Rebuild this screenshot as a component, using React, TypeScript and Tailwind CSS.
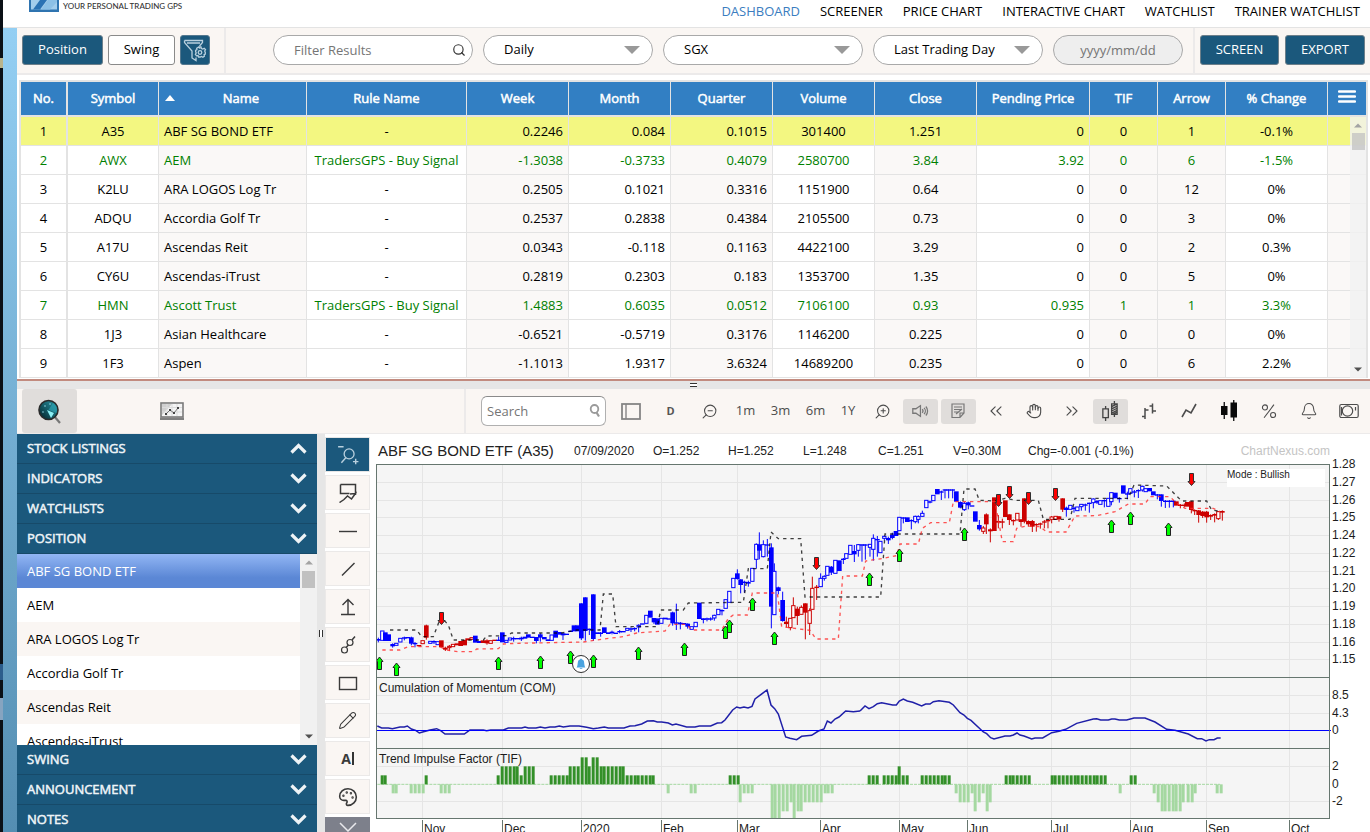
import React from "react";
import {
  Bell,
  ChevronsLeft,
  ChevronsRight,
  Hand,
  Palette,
  Pencil,
  Search,
  ZoomIn,
  ZoomOut,
} from "lucide-react";

/* ------------------------------------------------------------------ data */

const NAV = [
  "DASHBOARD",
  "SCREENER",
  "PRICE CHART",
  "INTERACTIVE CHART",
  "WATCHLIST",
  "TRAINER WATCHLIST",
];

type Column = { label: string; col: string; cell: string };

const COLUMNS: Column[] = [
  { label: "No.", col: "w-[47px]", cell: "text-center border-r-2" },
  { label: "Symbol", col: "w-[91px]", cell: "text-center border-r" },
  { label: "Name", col: "w-[148px]", cell: "text-left pl-[5px] border-r bg-[#faf8f7]" },
  { label: "Rule Name", col: "w-[160px]", cell: "text-center border-r" },
  { label: "Week", col: "w-[102px]", cell: "text-right pr-[5px] border-r bg-[#faf8f7]" },
  { label: "Month", col: "w-[102px]", cell: "text-right pr-[5px] border-r" },
  { label: "Quarter", col: "w-[102px]", cell: "text-right pr-[5px] border-r bg-[#faf8f7]" },
  { label: "Volume", col: "w-[102px]", cell: "text-center border-r" },
  { label: "Close", col: "w-[102px]", cell: "text-center border-r bg-[#faf8f7]" },
  { label: "Pending Price", col: "w-[113px]", cell: "text-right pr-[5px] border-r" },
  { label: "TIF", col: "w-[68px]", cell: "text-center border-r bg-[#faf8f7]" },
  { label: "Arrow", col: "w-[68px]", cell: "text-center border-r bg-[#faf8f7]" },
  { label: "% Change", col: "w-[102px]", cell: "text-center border-r" },
];

const ROWS: string[][] = [
  ["1", "A35", "ABF SG BOND ETF", "-", "0.2246", "0.084", "0.1015", "301400", "1.251", "0", "0", "1", "-0.1%"],
  ["2", "AWX", "AEM", "TradersGPS - Buy Signal", "-1.3038", "-0.3733", "0.4079", "2580700", "3.84", "3.92", "0", "6", "-1.5%"],
  ["3", "K2LU", "ARA LOGOS Log Tr", "-", "0.2505", "0.1021", "0.3316", "1151900", "0.64", "0", "0", "12", "0%"],
  ["4", "ADQU", "Accordia Golf Tr", "-", "0.2537", "0.2838", "0.4384", "2105500", "0.73", "0", "0", "3", "0%"],
  ["5", "A17U", "Ascendas Reit", "-", "0.0343", "-0.118", "0.1163", "4422100", "3.29", "0", "0", "2", "0.3%"],
  ["6", "CY6U", "Ascendas-iTrust", "-", "0.2819", "0.2303", "0.183", "1353700", "1.35", "0", "0", "5", "0%"],
  ["7", "HMN", "Ascott Trust", "TradersGPS - Buy Signal", "1.4883", "0.6035", "0.0512", "7106100", "0.93", "0.935", "1", "1", "3.3%"],
  ["8", "1J3", "Asian Healthcare", "-", "-0.6521", "-0.5719", "0.3176", "1146200", "0.225", "0", "0", "0", "0%"],
  ["9", "1F3", "Aspen", "-", "-1.1013", "1.9317", "3.6324", "14689200", "0.235", "0", "0", "6", "2.2%"],
];

const POSITIONS = [
  "ABF SG BOND ETF",
  "AEM",
  "ARA LOGOS Log Tr",
  "Accordia Golf Tr",
  "Ascendas Reit",
  "Ascendas-iTrust",
];

/* Candles: x, body top, body bottom, kind, [high, low]; in thirds of a pixel.
   b/r filled blue/red, B/R hollow blue/red. */
const CANDLES_A = `25 537 542 b 533 547;37 513 541 B;46 517 543 b;56 523 543 b;68 552 559 b 550 563;79 550 556 B;91 535 546 B;103 532 535 b 530 541;113 531 534 b;124 532 551 b 530 556;135 549 553 b 546 562;147 555 559 r;158 542 551 R;169 496 533 r 494 539;181 544 550 B;192 543 547 b 541 552;203 545 554 B;214 541 562 r;226 563 569 r 560 573;238 559 563 R 555 573;249 553 560 R;261 550 556 r;272 543 558 r;284 540 556 r;293 535 541 r;305 533 538 R;316 527 548 b;328 543 549 b;339 541 549 r;351 541 550 r 538 554;362 542 550 R;374 539 543 r;386 539 543 b 530 543;397 517 547 b;409 541 547 B;420 534 540 B;431 534 538 b 530 545;443 534 538 b;454 533 538 b 530 543;465 530 536 b;475 523 533 b;487 530 534 b;499 531 543 b 531 550;511 523 533 b 520 545;523 531 538 b;534 538 543 b;545 525 541 B;557 512 533 b;568 516 524 b;579 520 526 b 518 540;590 521 524 b;602 512 515 b;612 496 514 b;623 496 514 b;634 430 535 b 430 540;646 412 513 b 412 542;658 506 510 b 506 525;670 403 537 b 403 543;682 517 522 b;692 518 521 b 516 530;703 502 519 b;715 517 522 b;726 515 519 b 512 523;737 518 521 b;749 513 516 b 510 520;760 513 517 b;772 505 511 B;783 505 509 b 502 516;794 504 508 b 502 514;806 496 501 B 493 517;817 490 494 b;829 466 490 B;841 452 473 b;852 474 487 b 474 492;862 475 494 b;874 475 490 B;886 473 478 b;897 475 478 b;908 457 490 b 455 497;919 487 490 b 431 510;931 488 493 b 486 508;942 489 493 b;953 491 500 b 490 506;965 500 508 B;977 487 500 B;988 428 477 b`;

const CANDLES_B = `40 475 480 b 475 490;51 475 479 b 473 484;62 475 478 b 472 482;73 466 474 B 464 482;85 448 464 B;96 450 453 b 448 466;107 419 445 B;118 394 427 B;130 355 383 B;142 340 357 b 328 359;152 358 375 b 358 400;163 365 368 b 362 398;175 366 371 b 362 380;187 325 364 B;199 253 298 B 250 326;208 253 272 b 217 298;220 254 290 B 241 292;232 253 257 b 237 290;244 262 440 b 250 505;253 334 464 B 310 464;265 382 393 b 380 403;278 420 483 b 395 485;289 485 492 r 470 503;301 475 503 R 475 511;310 437 473 R 412 473;322 446 468 r 440 495;334 442 463 R 436 463;346 430 458 r 430 538;359 452 490 R 445 525;367 385 448 R 350 448;380 380 384 r 375 420;392 355 380 B 340 380;403 349 355 B 346 362;412 319 346 B;424 320 338 b 318 345;436 301 340 B;448 301 333 b;460 296 299 b 294 312;469 281 295 B;481 256 283 B;493 273 283 b 255 306;505 254 271 B 252 290;516 253 256 b 253 305;526 253 256 b 253 299;540 253 262 B 253 290;550 235 268 B 223 302;562 237 240 b 228 290;571 244 278 B;583 229 235 B 227 242;595 234 241 b 230 252;607 224 234 b 218 238;618 213 228 b;628 172 212 B;640 172 176 b 172 190;652 172 186 b;664 180 184 b 178 208;676 169 185 B 167 190;685 170 178 B 166 190;697 160 169 B 152 170;709 121 143 B;720 124 127 b 122 130;730 106 122 B;742 87 103 b;754 94 98 b 92 120;765 88 92 b 88 115;776 88 92 b 88 115;788 88 92 b 88 115;799 94 125 b;811 126 143 b 124 145;823 130 149 B 126 153;835 127 136 b 125 148;846 136 140 b;856 154 185 b;868 195 208 b 180 212;880 204 214 R 198 222;889 163 193 r 160 222;901 208 214 r 205 247;913 112 213 r;925 183 188 r 165 205;937 184 188 r 176 205;946 121 171 r;958 163 180 r 163 195;970 180 184 r 178 196;982 160 180 R`;

const CANDLES_C = `33 178 186 r 178 200;43 115 185 r 115 190;55 183 193 r 181 200;67 183 200 r 180 216;79 192 196 r 190 215;91 190 194 r 188 206;103 184 188 r 180 205;114 180 184 r 178 205;125 171 178 R 168 190;137 169 178 R;147 169 178 r 168 185;158 115 149 r 115 156;169 143 150 b 140 170;181 136 148 B;192 143 147 b 140 158;202 141 152 B;214 133 140 B 133 152;226 133 136 b 131 152;238 128 132 b 128 158;250 117 128 B 115 145;261 123 128 b 120 132;271 122 133 B;283 120 124 b 118 142;295 115 139 B;304 98 125 B 98 136;316 98 115 b;328 114 118 b 112 128;340 76 101 b;352 100 104 b 95 118;361 86 100 B;373 94 98 b 90 112;385 90 94 b 88 114;397 79 90 B 77 95;407 86 95 B;419 84 94 b;430 94 106 b;442 103 107 b 102 118;454 103 123 b 103 140;466 122 125 b 120 144;478 122 125 b 120 143;490 122 126 b 120 142;499 124 137 r;511 134 138 r 132 145;523 134 138 r 130 142;532 126 140 r;544 124 150 r 124 160;554 150 154 r 148 165;566 151 165 r 150 188;578 155 168 r 153 174;590 155 172 r 153 188;602 165 170 r 163 180;614 162 167 r 160 187;625 155 176 R 153 180;637 153 158 r 151 182`;

const UPPER =
  "60,510 140,510 155,530 190,530 213,470 235,495 250,540 340,540 350,528 410,527 425,519 575,519 620,510 690,510 700,402 728,402 738,500 862,500 872,450 940,450 955,429 1120,427 1135,326 1192,326 1203,216 1225,236 1292,236 1305,411 1532,411 1545,222 1770,222 1782,87 1815,87 1828,121 1875,123 1905,115 1940,121 2005,121 2020,178 2100,178 2115,115 2275,115 2292,75 2390,78 2435,123 2510,123 2525,150 2555,155";
const LOWER =
  "37,570 90,570 115,560 210,560 230,570 265,575 310,575 320,567 385,566 400,552 440,550 640,546 700,537 760,530 800,519 885,513 900,493 950,493 965,510 1055,510 1075,475 1090,465 1132,465 1147,399 1222,399 1235,500 1320,511 1338,537 1405,537 1418,348 1477,348 1487,303 1540,295 1580,287 1590,252 1645,252 1657,205 1682,188 1738,188 1750,125 1875,125 1897,245 1930,245 1940,205 1970,198 2010,200 2030,216 2088,216 2115,168 2180,167 2235,155 2275,132 2325,132 2340,110 2400,110 2420,130 2445,145 2530,145 2550,155";

const COM_LEFT =
  "22,150 35,156 55,156 67,158 90,153 103,153 112,150 124,159 137,163 148,171 158,168 180,162 200,158 212,164 225,174 283,174 300,162 340,162 350,164 362,162 400,162 415,156 455,156 465,153 475,156 498,156 511,153 525,156 540,153 555,153 568,150 580,153 600,150 627,150 650,154 670,158 685,156 703,153 715,156 762,156 780,150 795,149 815,144 832,135 850,134 862,138 875,138 895,141 907,147 918,144 950,153 975,153 988,150 1022,150 1042,141 1055,140 1065,132 1088,102 1100,93 1110,96 1122,93 1134,96 1146,91 1155,69 1191,42 1203,87 1214,98 1225,114 1247,183 1260,187 1280,191 1295,181 1325,178 1345,165 1362,159 1372,135 1383,141 1395,129 1407,123 1427,105 1450,107 1470,105";
const COM_RIGHT =
  "0,105 15,90 27,98 40,92 52,83 65,80 98,87 109,87 118,75 130,69 142,75 158,79 185,90 197,84 210,84 220,77 237,74 268,79 280,87 300,110 312,117 322,127 333,133 370,168 380,173 392,185 402,189 435,180 450,180 460,177 471,171 480,177 492,180 515,189 525,186 548,186 575,170 597,166 617,160 650,142 700,129 710,128 722,132 745,132 755,129 765,129 778,132 800,132 822,126 855,126 885,138 920,160 945,163 985,174 1012,188 1025,188 1038,195 1048,191 1062,191 1072,186 1082,186";

/* Runs of impulse bars: first x, last x, level. */
const TIF_LEFT = [
  [35, 44, 1], [68, 79, -1], [124, 158, -1], [169, 169, 1], [214, 238, -1], [385, 385, 1], [397, 442, 2],
  [454, 454, 1], [465, 488, 2], [544, 590, 1], [601, 624, 2], [635, 647, 3], [658, 658, 2], [669, 681, 3],
  [692, 760, 2], [772, 850, 1], [895, 895, -1], [964, 976, -1], [1079, 1103, 1], [1111, 1111, -2],
  [1123, 1147, -1], [1205, 1226, -4], [1238, 1250, -3], [1262, 1262, -2], [1271, 1271, -4],
  [1283, 1294, -3], [1306, 1352, -2], [1364, 1385, -1],
];
const TIF_RIGHT = [
  [28, 52, 1], [73, 108, 1], [118, 118, 2], [130, 142, 1], [187, 268, 1], [289, 289, -1], [301, 323, -2],
  [335, 335, -1], [346, 346, -3], [358, 358, -2], [370, 370, -1], [380, 380, -3], [391, 391, -2],
  [437, 506, 1], [575, 735, 1], [779, 779, -1], [812, 824, 1], [881, 881, -1], [893, 893, -2],
  [905, 960, -3], [970, 995, -2], [1006, 1006, -1], [1072, 1084, -1],
];

const UP_ARROWS = [
  [379, 657], [396, 663], [498, 657], [540, 656], [570, 651], [593, 655], [638, 647], [684, 643],
  [725, 626], [729, 620], [752, 598], [774, 632], [869, 573], [899, 549], [964, 528],
  [1111, 520], [1130, 512], [1168, 523],
];
const DOWN_ARROWS = [[441, 612], [816, 557], [998, 494], [1009, 486], [1028, 492], [1055, 488], [1191, 473]];

const MONTHS: [number, string][] = [
  [422, "Nov"], [502, "Dec"], [581, "2020"], [661, "Feb"], [737, "Mar"], [820, "Apr"],
  [899, "May"], [967, "Jun"], [1051, "Jul"], [1130, "Aug"], [1206, "Sep"], [1289, "Oct"],
];
const PRICES: [number, string][] = [
  [464, "1.28"], [482, "1.27"], [500, "1.26"], [517, "1.25"], [535, "1.24"], [553, "1.22"],
  [571, "1.21"], [588, "1.20"], [606, "1.19"], [624, "1.18"], [642, "1.16"], [659, "1.15"],
  [695, "8.5"], [713, "4.3"], [730, "0"], [766, "2"], [784, "0"], [801, "-2"],
];

/* ----------------------------------------------------------------- chart */

const BLUE = "#0000ff";
const RED = "#cc0000";

function Candles({ data }: { data: string }) {
  return (
    <>
      {data.split(";").map((line) => {
        const [x, top, bottom, kind, high, low] = line.trim().split(" ");
        const cx = Number(x);
        const color = kind.toLowerCase() === "b" ? BLUE : RED;
        const hollow = kind === "B" || kind === "R";
        const h = Number(bottom) - Number(top);
        return (
          <g key={x}>
            {high && (
              <line x1={cx} x2={cx} y1={Number(high)} y2={Number(low)} stroke={color} strokeWidth={3} />
            )}
            {hollow ? (
              <rect x={cx - 5} y={Number(top)} width={10} height={Math.max(h, 4)} fill="#ffffff" stroke={color} strokeWidth={3} />
            ) : (
              <rect x={cx - 7} y={Number(top)} width={14} height={Math.max(h, 4)} fill={color} />
            )}
          </g>
        );
      })}
    </>
  );
}

function ImpulseBars({ runs }: { runs: number[][] }) {
  const bars: React.ReactNode[] = [];
  runs.forEach(([from, to, level]) => {
    const n = Math.round((to - from) / 11.45);
    for (let i = 0; i <= n; i++) {
      const x = n === 0 ? from : from + ((to - from) * i) / n;
      const h = Math.min(Math.abs(level) * 27, 102);
      bars.push(
        <rect
          key={`${from}-${i}`}
          x={Math.round(x / 3) * 3 - 4}
          y={level > 0 ? 325 - h : 325}
          width={9}
          height={h}
          fill={level > 0 ? "#339029" : "#a5d8a1"}
        />,
      );
    }
  });
  return <>{bars}</>;
}

function Chart() {
  return (
    <svg
      viewBox="371 462 999 370"
      className="block w-full overflow-visible"
      fontFamily="'Liberation Sans', Arial, sans-serif"
      fontSize="12"
      role="img"
      aria-label="Daily price chart"
    >
      <rect x="376" y="464" width="954" height="354" fill="#f5f5f5" />
      <g stroke="#e5e5e5" shapeRendering="crispEdges">
        {MONTHS.map(([x]) => (
          <line key={x} x1={x + 0.5} x2={x + 0.5} y1="464" y2="818" />
        ))}
        {PRICES.filter(([, l]) => l !== "0").map(([y]) => (
          <line key={y} x1="377" x2="1329" y1={y + 0.5} y2={y + 0.5} />
        ))}
      </g>

      <defs>
        <clipPath id="plot">
          <rect x="377" y="465" width="952" height="353" />
        </clipPath>
      </defs>
      <g clipPath="url(#plot)">
        <g transform="translate(370 460) scale(0.333333)">
          <Candles data={CANDLES_A} />
        </g>
        <g transform="translate(690 460) scale(0.333333)">
          <Candles data={CANDLES_B} />
        </g>
        <g transform="translate(1010 460) scale(0.333333)">
          <Candles data={CANDLES_C} />
        </g>
        <g transform="translate(370 460) scale(0.333333)" fill="none" strokeWidth="4" strokeDasharray="10 12">
          <polyline points={UPPER} stroke="#000000" strokeOpacity="0.75" />
          <polyline points={LOWER} stroke="#ff2a2a" strokeOpacity="0.8" />
        </g>
        <g fill="#00ff00" stroke="#202020">
          {UP_ARROWS.map(([x, y]) => (
            <path key={`${x}u`} d={`M${x + 0.5} ${y}l3.5 4.5h-1.500v8h-4v-8h-1.500z`} />
          ))}
        </g>
        <g fill="#ff0000" stroke="#303030">
          {DOWN_ARROWS.map(([x, y]) => (
            <path key={`${x}d`} d={`M${x - 1.5} ${y + 0.5}h4v8h1.500l-3.500 4l-3.500 -4h1.500z`} />
          ))}
        </g>
        <circle cx="581" cy="664" r="8.5" fill="#ffffff" stroke="#303030" />
        <path d="M576.5 667.5c1.5-1.5 1-5.5 1.8-6.8c.6-1 1.7-1.2 1.9-1.4c0-1.2 1.6-1.2 1.6 0c.2.2 1.3.4 1.9 1.4c.8 1.3.3 5.300 1.8 6.800z M579.800 668.300h2.500v.8h-2.500z" fill="#4aa3df" />
      </g>

      <g transform="translate(370 676) scale(0.333333)">
        <polyline points={COM_LEFT} fill="none" stroke="#1f1fa8" strokeWidth="4.5" />
        <line x1="22" x2="1500" y1="325" y2="325" stroke="#a5d8a1" strokeWidth="3" strokeDasharray="9 3" />
        <ImpulseBars runs={TIF_LEFT} />
      </g>
      <g transform="translate(860 676) scale(0.333333)">
        <polyline points={COM_RIGHT} fill="none" stroke="#1f1fa8" strokeWidth="4.5" />
        <line x1="30" x2="1080" y1="325" y2="325" stroke="#a5d8a1" strokeWidth="3" strokeDasharray="9 3" />
        <ImpulseBars runs={TIF_RIGHT} />
      </g>
      <line x1="377" x2="1331" y1="730.5" y2="730.5" stroke="#0000ff" shapeRendering="crispEdges" />

      <g stroke="#66766f" fill="none" shapeRendering="crispEdges">
        <rect x="376.500" y="464.500" width="953" height="354" />
        <line x1="376" x2="1330" y1="677.500" y2="677.500" />
        <line x1="376" x2="1330" y1="748.500" y2="748.500" />
        {MONTHS.map(([x]) => (
          <line key={x} x1={x + 0.5} x2={x + 0.5} y1="820" y2="832" />
        ))}
      </g>

      <rect x="1227" y="469" width="98" height="18" fill="#ffffff" />
      <g fill="#1c1c1c">
        <text x="1227" y="478" fontSize="10">Mode : Bullish</text>
        <text x="379" y="692">Cumulation of Momentum (COM)</text>
        <text x="379" y="763">Trend Impulse Factor (TIF)</text>
        {PRICES.map(([y, label]) => (
          <text key={y} x="1332" y={y + 4}>{label}</text>
        ))}
        {MONTHS.map(([x, label]) => (
          <text key={x} x={x + 2} y="833">{label}</text>
        ))}
      </g>
    </svg>
  );
}

/* ----------------------------------------------------------------- icons */

function Svg({ size = 20, children }: { size?: number; children: React.ReactNode }) {
  return (
    <svg width={size} height={size} viewBox="0 0 20 20" fill="none" stroke="currentColor" strokeWidth="1.2" aria-hidden="true">
      {children}
    </svg>
  );
}

const FilterGearIcon = () => (
  <svg width="24" height="24" viewBox="0 0 24 24" fill="none" stroke="#b9d0de" strokeWidth="1.3" aria-hidden="true">
    <path d="M1.500 2.500h18v2l-3 3.500M1.500 2.500v2l7.500 8.500v7l4 2.500v-3M4 5h13" />
    <circle cx="17" cy="14.500" r="1.800" />
    <path d="M16 9h2l.4 1.500l1.400.6l1.400-.8l1.300 1.300l-.8 1.400l.6 1.400v1.600l-1.200.6l.3 1.500l-1.500 1.100l-1.400-.8l-1.300.6h-1.600l-.6-1.500l-1.400.3l-1.200-1.400l.8-1.500l-.6-1.400v-1.200l1.300-.6l-.2-1.500l1.500-1l1.100.6z" />
  </svg>
);

const PanelIcon = () => (
  <svg width="20" height="17" viewBox="0 0 20 17" fill="none" stroke="#858585" strokeWidth="1.800" aria-hidden="true">
    <rect x="1" y="1" width="18" height="15" />
    <path d="M5 1v15" strokeWidth="1.400" />
  </svg>
);

const SpeakerIcon = () => (
  <Svg size={18}>
    <path d="M2 7.500h3.500l5-3.500v12l-5-3.500H2zM12.500 8a3 3 0 0 1 0 4M14.500 6.500a5 5 0 0 1 0 7M16.500 5a7.500 7.500 0 0 1 0 10" strokeWidth="1.400" />
  </Svg>
);
const NoteIcon = () => (
  <Svg>
    <path d="M4 3h12v9l-4 4.500H4zM16 12h-4v4.500M6 6h8M6 8.500h8M6 11h4M8 13l6-5" />
  </Svg>
);
const CandleIcon = () => (
  <Svg size={22}>
    <path d="M3.500 8h5v8h-5zM6 5.500v2.500M6 16v3M14 1v2.500M14 13v2.500" />
    <path d="M11.500 3.500h5v9.500h-5zM11.500 6l5-2.500M11.500 8l5-2.500M11.500 10l5-2.500M11.500 12l5-2.500M12.500 13l4-2" />
  </Svg>
);
const OhlcIcon = () => (
  <Svg>
    <path d="M6 7v11M3 15.500h3M6 9h3.500M13.500 2.500v10M10.500 5h3M13.500 10h3.500" strokeWidth="1.500" />
  </Svg>
);
const LineIcon = () => (
  <Svg>
    <path d="M3 16l4-7l5 3l5-9" strokeWidth="1.600" />
  </Svg>
);
const SolidCandleIcon = () => (
  <svg width="20" height="22" viewBox="0 0 20 22" aria-hidden="true">
    <path d="M2 6h6.500v9H2zM4.600 2h1.300v17H4.600zM11.500 2.500H18v15h-6.500zM14.100 0h1.300v21h-1.300z" fill="#0a0a0a" />
  </svg>
);
const PercentIcon = () => (
  <Svg size={18}>
    <circle cx="5.500" cy="6" r="2.800" />
    <circle cx="14.500" cy="14.500" r="2.800" />
    <path d="M15.500 3L4.500 17.500" />
  </Svg>
);
const BellIcon = () => <Bell size={18} strokeWidth={1.400} />;
const CameraIcon = () => (
  <Svg>
    <rect x="0.800" y="3.500" width="18.400" height="13" rx="1.500" />
    <circle cx="8.500" cy="10" r="5.200" />
    <path d="M16.500 6v3.500M2.500 6v8.500" />
  </Svg>
);

const ScanIcon = () => (
  <svg width="26" height="26" viewBox="0 0 26 26" aria-hidden="true">
    <defs>
      <linearGradient id="lens" x1="1" y1="0" x2="0" y2="1">
        <stop offset="0" stopColor="#2b99a8" />
        <stop offset="0.550" stopColor="#135863" />
        <stop offset="1" stopColor="#041a20" />
      </linearGradient>
    </defs>
    <path d="M17 18l6 7" stroke="#777" strokeWidth="2.200" />
    <circle cx="11.500" cy="12" r="9.500" fill="url(#lens)" stroke="#2a2a2a" strokeWidth="1.600" />
    <path d="M11.500 12l4.500-7a9 9 0 0 1 3.500 10z" fill="#2ea9b9" opacity="0.600" />
    <path d="M10 12l4 8l3-5z" fill="#8df0f5" />
    <circle cx="8" cy="8" r="0.700" fill="#aef" />
    <circle cx="6" cy="14" r="0.700" fill="#aef" />
    <circle cx="13" cy="6" r="0.700" fill="#aef" />
  </svg>
);

const LaptopIcon = () => (
  <svg width="24" height="18" viewBox="0 0 24 18" fill="none" aria-hidden="true">
    <rect x="1" y="1" width="22" height="14" fill="#f4f4f4" stroke="#7a7a7a" strokeWidth="1.600" />
    <path d="M2 2h10L2 13z" fill="#cfcfcf" />
    <path d="M7 2v12M12 2v12M17 2v12M2 5.500h20M2 10h20" stroke="#dcdcdc" />
    <path d="M6 12l4-4l4 3l4-5" stroke="#777" />
    <path d="M5 11h2v2H5zM9 7h2v2H9zM13 10h2v2h-2zM17 5h2v2h-2z" fill="#444" />
    <path d="M0 15.500h24V18H0z" fill="#808080" />
  </svg>
);

const DRAW_TOOLS: { label: string; icon: React.ReactNode }[] = [
  {
    label: "Callout",
    icon: (
      <Svg>
        <path d="M2.500 1.500h15v9M2.500 1.500v9h9M17.500 9h1M18.500 9l-5 7l-4-3l-3.500 3.500l-4.500 3M12 11l5.500-.5M17.500 7v5" strokeWidth="1.500" />
      </Svg>
    ),
  },
  { label: "Horizontal line", icon: <Svg><path d="M1 10.500h18" strokeWidth="1.400" /></Svg> },
  { label: "Trend line", icon: <Svg><path d="M4 16.500L16.500 4" strokeWidth="1.500" /></Svg> },
  { label: "Extension", icon: <Svg><path d="M10 17V3M4.500 8L10 2.500L15.500 8M3 17.500h14" strokeWidth="1.400" /></Svg> },
  {
    label: "Link points",
    icon: (
      <Svg>
        <circle cx="6.500" cy="15" r="3" />
        <circle cx="12" cy="7.500" r="3" />
        <path d="M8 12.500l2.500-2.500M14 5l3-3.500" strokeWidth="1.500" />
      </Svg>
    ),
  },
  { label: "Rectangle", icon: <Svg><rect x="1.500" y="4.500" width="17" height="12" strokeWidth="1.400" /></Svg> },
  { label: "Pencil", icon: <Pencil size={19} strokeWidth={1.300} /> },
  { label: "Text", icon: <span className="border-r-2 border-[#333] pr-px text-[14px] leading-[13px] font-bold">A</span> },
  { label: "Palette", icon: <Palette size={20} strokeWidth={1.900} className="-scale-x-100" /> },
];

/* --------------------------------------------------------------- pieces */

function Pill({ label, value, width }: { label: string; value: string; width: string }) {
  return (
    <div className={`relative ${width}`}>
      <select
        aria-label={label}
        className="block h-[30px] w-full appearance-none rounded-full border border-[#a9a9a9] bg-white pl-[20px] text-[13px] text-black"
      >
        <option>{value}</option>
      </select>
      <svg width="16" height="8" viewBox="0 0 16 8" className="pointer-events-none absolute top-[11px] right-[13px]" aria-hidden="true">
        <path d="M0 0h16l-8 8z" fill="#999" />
      </svg>
    </div>
  );
}

function ScrollArrow({ up, dim }: { up?: boolean; dim?: boolean }) {
  return (
    <svg width="8" height="5" viewBox="0 0 8 5" aria-hidden="true">
      <path d={up ? "M0 4.500L4 0.500L8 4.500z" : "M0 0.500L4 4.500L8 0.500z"} fill={dim ? "#a3a3a3" : "#505050"} />
    </svg>
  );
}

function PanelHeading({ title, open }: { title: string; open?: boolean }) {
  return (
    <button
      type="button"
      className="flex h-[30px] w-full shrink-0 items-center justify-between border-b border-[#174a69] bg-[#1b587c] px-[10px] text-[13px] font-medium text-[#eef4f8] [-webkit-text-stroke:0.5px]"
    >
      {title}
      <svg width="17" height="11" viewBox="0 0 17 11" fill="none" stroke="#eef3f6" strokeWidth="3.200" aria-hidden="true">
        <path d={open ? "M1.500 9.500l7-7l7 7" : "M1.500 1.500l7 7l7-7"} />
      </svg>
    </button>
  );
}

function ToolButton({ label, width, active, children }: { label: string; width: string; active?: boolean; children: React.ReactNode }) {
  return (
    <button type="button" aria-label={label} className={`flex h-full shrink-0 items-center justify-center text-[13px] text-[#4c4c4c] ${width}`}>
      {active ? (
        <span className="flex h-[25px] w-[35px] items-center justify-center rounded-[3px] bg-[#e0dddb] text-[#777]">{children}</span>
      ) : (
        children
      )}
    </button>
  );
}

const solidButton = "h-[30px] rounded-[3px] border border-[#6d7f8a] bg-[#1b587c] text-[13px] text-white";

/* ------------------------------------------------------------------ page */

function ResultsTable() {
  return (
    <section className="shrink-0 bg-white px-[2px] pt-[5px] pb-px">
      <div className="relative border-x-2 border-t-2 border-[#e3e3e3]">
        <table className="w-full table-fixed border-separate border-spacing-0 text-[13px] leading-[18px] text-black">
          <colgroup>
            {COLUMNS.map((c) => (
              <col key={c.label} className={c.col} />
            ))}
            <col className="w-[38px]" />
          </colgroup>
          <thead>
            <tr className="text-white [-webkit-text-stroke:0.5px]">
              {COLUMNS.map((c, i) => (
                <th
                  key={c.label}
                  scope="col"
                  className={`relative h-[35px] border-b-2 border-[#e3e3e3] bg-[#327fc3] p-0 pb-[2px] font-medium ${i === 0 ? "border-r-2" : "border-r"} ${i === 2 ? "pl-[17px]" : ""}`}
                >
                  {i === 2 && (
                    <svg width="10" height="6" viewBox="0 0 10 6" className="absolute top-[13px] left-[6px]" aria-hidden="true">
                      <path d="M0 6L5 0l5 6z" fill="#fff" />
                    </svg>
                  )}
                  {c.label}
                </th>
              ))}
              <th scope="col" className="h-[35px] border-b-2 border-[#e3e3e3] bg-[#327fc3] p-0">
                <button type="button" aria-label="Columns" className="flex h-full w-full items-center justify-center pb-[4px]">
                  <svg width="18" height="13" viewBox="0 0 18 13" aria-hidden="true">
                    <path d="M1 1.500h16M1 6.500h16M1 11.500h16" stroke="#fff" strokeWidth="2.400" strokeLinecap="round" />
                  </svg>
                </button>
              </th>
            </tr>
          </thead>
          <tbody>
            {ROWS.map((row, r) => (
              <tr key={row[0]} className={row[3] !== "-" ? "text-[#008000]" : "text-black"}>
                {row.map((value, i) => (
                  <td
                    key={COLUMNS[i].label}
                    className={`h-[29px] overflow-hidden border-b border-[#e3e3e3] p-0 whitespace-nowrap ${COLUMNS[i].cell} ${r === 0 ? "bg-[#f3f781]!" : ""}`}
                  >
                    {value}
                  </td>
                ))}
                <td className={`h-[29px] border-b border-[#e3e3e3] p-0 ${r === 0 ? "bg-[#f3f781]" : "bg-[#faf8f7]"}`} />
              </tr>
            ))}
          </tbody>
        </table>
        <div className="absolute top-[35px] right-0 bottom-0 flex w-[16px] flex-col items-center justify-between bg-[#f1f1f1]/80 py-[6px]">
          <div className="flex flex-col items-center gap-[5px]">
            <ScrollArrow up dim />
            <div className="h-[17px] w-[13px] bg-[#c1c1c1]/75" />
          </div>
          <ScrollArrow />
        </div>
      </div>
    </section>
  );
}

function ChartToolbar() {
  return (
    <div className="flex h-[45px] shrink-0 border-b border-[#eceaea] bg-[#faf6f3]">
      <div className="flex w-[449px] shrink-0 items-start border-r-2 border-[#eceaea] pl-[5px]">
        <button type="button" aria-label="Scan" className="flex h-[44px] w-[55px] items-center justify-center rounded-[3px] bg-[#e0dddb]">
          <ScanIcon />
        </button>
        <button type="button" aria-label="Charts" className="ml-[67px] flex h-[44px] w-[56px] items-center justify-center">
          <LaptopIcon />
        </button>
      </div>
      <div className="flex flex-1 items-center">
        <label className="relative ml-[15px] block w-[125px] shrink-0">
          <input
            type="text"
            placeholder="Search"
            aria-label="Search chart"
            className="block h-[30px] w-full rounded-[6px] border border-[#b0b0b0] border-t-[#8a8a8a] bg-white pl-[5px] text-[13px] placeholder:text-[#757575]"
          />
          <svg width="12" height="14" viewBox="0 0 12 14" className="absolute top-[8px] right-[5px]" fill="none" stroke="#9a9a9a" strokeWidth="1.800" aria-hidden="true">
            <ellipse cx="5.500" cy="5" rx="3.800" ry="4" />
            <path d="M7.500 8.500l2.500 4" strokeWidth="2.200" />
          </svg>
        </label>
        <ToolButton label="Toggle panel" width="ml-[5px] w-[40px]"><PanelIcon /></ToolButton>
        <ToolButton label="Daily" width="w-[39px]"><span className="text-[11px] font-bold text-[#555]">D</span></ToolButton>
        <ToolButton label="Zoom out" width="w-[38px]"><ZoomOut size={17} strokeWidth={1.500} className="-scale-x-100" /></ToolButton>
        <ToolButton label="1 month" width="w-[35px]">1m</ToolButton>
        <ToolButton label="3 months" width="w-[35px]">3m</ToolButton>
        <ToolButton label="6 months" width="w-[35px]">6m</ToolButton>
        <ToolButton label="1 year" width="w-[30px]">1Y</ToolButton>
        <ToolButton label="Zoom in" width="w-[38px]"><ZoomIn size={17} strokeWidth={1.500} className="-scale-x-100" /></ToolButton>
        <ToolButton label="Sound" width="w-[38px]" active><SpeakerIcon /></ToolButton>
        <ToolButton label="Notes" width="w-[38px]" active><NoteIcon /></ToolButton>
        <ToolButton label="Back" width="w-[38px]"><ChevronsLeft size={20} strokeWidth={1.300} /></ToolButton>
        <ToolButton label="Pan" width="w-[38px]"><Hand size={16} strokeWidth={1.700} /></ToolButton>
        <ToolButton label="Forward" width="w-[38px]"><ChevronsRight size={20} strokeWidth={1.300} /></ToolButton>
        <ToolButton label="Candlestick" width="w-[38px]" active><span className="text-[#444]"><CandleIcon /></span></ToolButton>
        <ToolButton label="OHLC bars" width="w-[40px]"><OhlcIcon /></ToolButton>
        <ToolButton label="Line" width="w-[40px]"><LineIcon /></ToolButton>
        <ToolButton label="Solid candles" width="w-[40px]"><SolidCandleIcon /></ToolButton>
        <ToolButton label="Percent" width="w-[40px]"><PercentIcon /></ToolButton>
        <ToolButton label="Alert" width="w-[40px]"><BellIcon /></ToolButton>
        <ToolButton label="Snapshot" width="w-[40px]"><CameraIcon /></ToolButton>
      </div>
    </div>
  );
}

function Sidebar() {
  return (
    <aside className="flex w-[300px] shrink-0 flex-col overflow-hidden">
      <PanelHeading title="STOCK LISTINGS" open />
      <PanelHeading title="INDICATORS" />
      <PanelHeading title="WATCHLISTS" />
      <PanelHeading title="POSITION" />
      <div className="flex h-[191px] shrink-0 overflow-hidden">
        <ul className="flex-1 text-[13px] text-black">
          {POSITIONS.map((name, i) => (
            <li
              key={name}
              className={`flex h-[34px] items-center pt-[2px] pl-[10px] ${
                i === 0
                  ? "bg-linear-to-b from-[#92b6f4] to-[#5b87d5] to-70% text-white"
                  : i % 2
                    ? "bg-white"
                    : "bg-[#faf6f3]"
              }`}
            >
              {name}
            </li>
          ))}
        </ul>
        <div className="flex w-[17px] flex-col items-center justify-between bg-[#f1f1f1] py-[6px]">
          <div className="flex flex-col items-center gap-[6px]">
            <ScrollArrow up dim />
            <div className="h-[17px] w-[13px] bg-[#c1c1c1]" />
          </div>
          <ScrollArrow />
        </div>
      </div>
      <PanelHeading title="SWING" />
      <PanelHeading title="ANNOUNCEMENT" />
      <PanelHeading title="NOTES" />
    </aside>
  );
}

function DrawTools() {
  return (
    <div className="flex w-[46px] shrink-0 flex-col gap-[3px] bg-white pt-[3px]">
      <button type="button" aria-label="Zoom" className="mr-px flex h-[35px] shrink-0 items-center justify-center border border-[#e6e6e6] bg-[#1b587c] text-[#b9d0de]">
        <Svg size={22}>
          <circle cx="11" cy="9" r="4.500" />
          <path d="M8 12.500L4 17M1 2.500h5M14.500 16h5M17 13.500v5" strokeWidth="1.300" />
        </Svg>
      </button>
      {DRAW_TOOLS.map((t) => (
        <button
          key={t.label}
          type="button"
          aria-label={t.label}
          className="mr-px flex h-[35px] shrink-0 items-center justify-center border border-[#ebe9e8] bg-[#faf6f3] text-[#3a3a3a]"
        >
          {t.icon}
        </button>
      ))}
      <button type="button" aria-label="More tools" className="mr-px flex h-[35px] shrink-0 justify-center bg-[#7d808b] pt-[5px]">
        <svg width="18" height="10" viewBox="0 0 18 10" fill="none" stroke="#e8e8ec" strokeWidth="1.500" aria-hidden="true">
          <path d="M1 1l8 8l8-8" />
        </svg>
      </button>
    </div>
  );
}

export default function App() {
  return (
    <div className="flex h-screen overflow-hidden bg-[#0c1218] font-['Open_Sans','Noto_Sans',sans-serif]">
      <div className="w-[3px] shrink-0 bg-[linear-gradient(#0b1016_0_58px,#b9b48c_58px_68px,#0b1016_68px_664px,#2c5d8c_664px_680px,#0b1016_680px_698px,#86a4c0_698px_720px,#0b1016_720px)]" />
      <div className="flex min-w-0 flex-1 flex-col">
        <header className="flex h-[28px] shrink-0 items-start justify-between border-b border-[#e3e3e3] bg-white pr-[10px] pl-[26px]">
          <div className="flex items-start gap-[4px]">
            <svg width="30" height="12" viewBox="0 0 30 12" aria-hidden="true">
              <path d="M0 0h30v12H0z" fill="#2f74b0" />
              <path d="M2 0h26v9.500H2z" fill="#a3cdec" />
              <path d="M4 9.500L11 0h7l-7 9.500z" fill="#2a72b4" />
              <path d="M12 9.500L19 0h9v2L21 9.500z" fill="#8cc0e6" />
            </svg>
            <span className="font-['Lato','Open_Sans',sans-serif] text-[8px] leading-[12px] font-medium text-[#333]">YOUR PERSONAL TRADING GPS</span>
          </div>
          <nav className="flex gap-[20px] pt-[2px] text-[13px] leading-[18px] font-medium">
            {NAV.map((item, i) => (
              <a key={item} href="#" className={i === 0 ? "text-[#3b7dc0]" : "text-black"}>
                {item}
              </a>
            ))}
          </nav>
        </header>

        <div className="flex min-h-0 flex-1">
          <div className="w-[14px] shrink-0 bg-linear-to-b from-[#94cff3] to-[#548eb2]" />
          <main className="flex min-w-0 flex-1 flex-col bg-white">
            <div className="flex h-[47px] shrink-0 border-b-2 border-[#eceaea] bg-[#faf6f3]">
              <div className="flex w-[209px] shrink-0 items-center gap-[5px] border-r-2 border-[#eceaea] pb-px pl-[5px]">
                <button type="button" className={`${solidButton} w-[81px]`}>Position</button>
                <button type="button" className="h-[30px] w-[67px] rounded-[3px] border border-[#8a8a8a] bg-white text-[13px] text-black">
                  Swing
                </button>
                <button type="button" aria-label="Filter settings" className="flex h-[30px] w-[30px] items-center justify-center rounded-[3px] border border-[#54788f] bg-[#1b587c]">
                  <FilterGearIcon />
                </button>
              </div>
              <div className="flex flex-1 items-center justify-end gap-[10px] pr-[10px] pb-px">
                <label className="relative block w-[200px]">
                  <input
                    type="text"
                    placeholder="Filter Results"
                    aria-label="Filter results"
                    className="block h-[30px] w-full rounded-full border border-[#a9a9a9] bg-white pl-[20px] text-[13px] placeholder:text-[#757575]"
                  />
                  <Search size={14} strokeWidth={2} className="absolute top-[8px] right-[7px] text-[#333]" />
                </label>
                <Pill label="Period" value="Daily" width="w-[170px]" />
                <Pill label="Exchange" value="SGX" width="w-[200px]" />
                <Pill label="Date" value="Last Trading Day" width="w-[170px]" />
                <input
                  type="text"
                  placeholder="yyyy/mm/dd"
                  aria-label="Custom date"
                  className="h-[30px] w-[130px] rounded-full border border-[#a9a9a9] bg-[#eeeeee] text-center text-[13px] placeholder:text-[#757575]"
                />
              </div>
              <div className="flex shrink-0 items-center gap-[6px] border-l-2 border-[#eceaea] px-[5px] pb-px">
                <button type="button" className={`${solidButton} w-[79px]`}>SCREEN</button>
                <button type="button" className={`${solidButton} w-[80px]`}>EXPORT</button>
              </div>
            </div>

            <ResultsTable />

            <div className="flex h-[10px] shrink-0 items-start justify-center border-t-2 border-[#c28b7f] bg-[#e6e6e6] pt-[2px]">
              <div className="h-[4px] w-[7px] border-y border-[#333] bg-white" />
            </div>

            <ChartToolbar />

            <div className="flex min-h-0 flex-1">
              <Sidebar />
              <div className="flex w-[8px] shrink-0 items-center justify-center bg-[#e6e6e6]">
                <div className="h-[7px] w-[4px] border-x border-[#333] bg-white" />
              </div>
              <DrawTools />
              <div className="min-w-0 flex-1 overflow-hidden bg-white font-['Liberation_Sans',Arial,sans-serif]">
                <div className="flex h-[28px] items-center pt-[6px] pr-[40px] pl-[7px] text-[12px] text-[#222]">
                  <h1 className="w-[196px] text-[15px]">ABF SG BOND ETF (A35)</h1>
                  <span className="w-[79px]">07/09/2020</span>
                  <span className="w-[75px]">O=1.252</span>
                  <span className="w-[75px]">H=1.252</span>
                  <span className="w-[75px]">L=1.248</span>
                  <span className="w-[75px]">C=1.251</span>
                  <span className="w-[75px]">V=0.30M</span>
                  <span>Chg=-0.001 (-0.1%)</span>
                  <span className="ml-auto text-[#c4c4c4]">ChartNexus.com</span>
                </div>
                <Chart />
              </div>
            </div>
          </main>
        </div>
      </div>
    </div>
  );
}
